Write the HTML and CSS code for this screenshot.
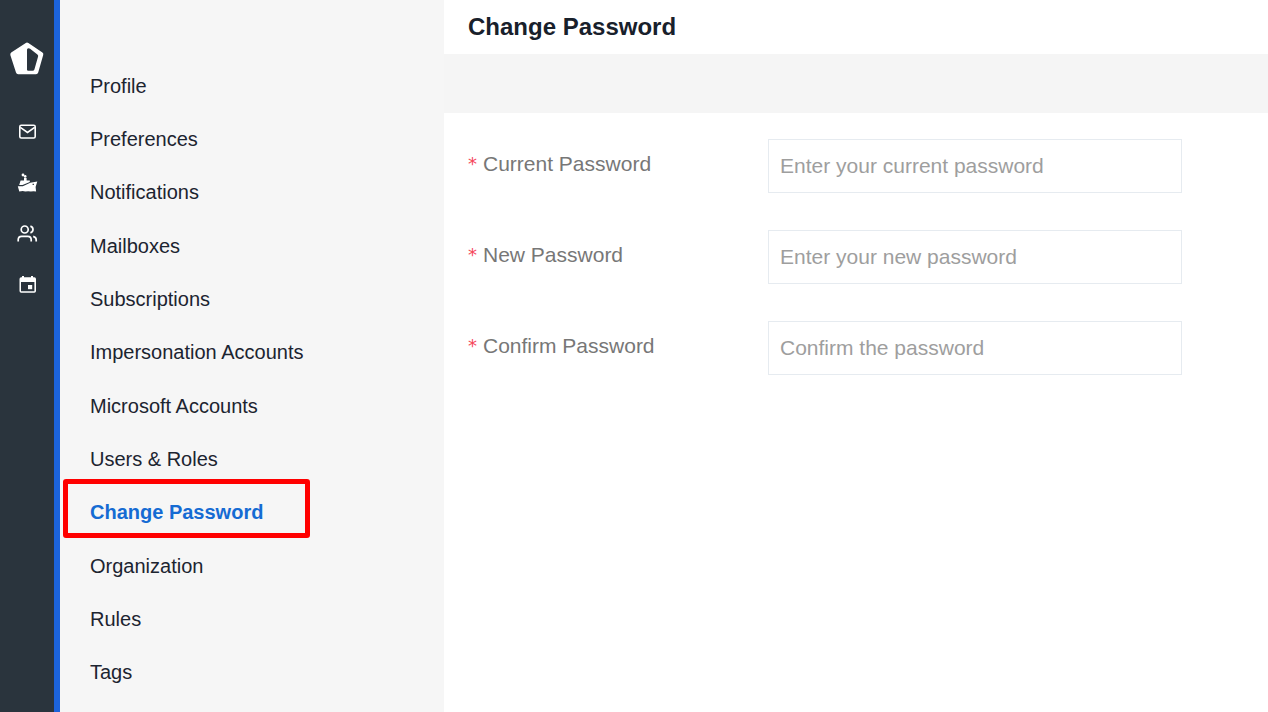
FILE: index.html
```
<!DOCTYPE html>
<html lang="en">
<head>
<meta charset="utf-8">
<meta name="viewport" content="width=device-width, initial-scale=1">
<title>Change Password</title>
<link rel="stylesheet" href="styles.css">
</head>
<body>
<div class="app">
  <nav class="rail" aria-label="Main">
    <a class="logo" href="#" aria-label="Home">
      <svg width="36" height="36" viewBox="0 0 36 36"><path fill="#fff" fill-rule="evenodd" d="M16.800 2.900q1.200-.8 2.600.1l14 9.600q1.300.9.800 2.400l-5 17.600q-.5 1.700-2.200 1.700H9.200q-1.700 0-2.200-1.700L1.400 15.200q-.5-1.600.8-2.600zM18 10v19.800q0 1 1.200 1h4.300q1.500 0 1.900-1.400l3.700-12.900q.4-1.300-.7-2.100l-7.300-5.600q-1.300-.9-2.300-.3-.8.400-.8 1.500z"/></svg>
    </a>
    <a class="rail-link" href="#" aria-label="Mail">
      <svg width="22" height="22" viewBox="0 0 22 22" fill="none" stroke="#fff" stroke-width="1.600"><rect x="3.800" y="5.300" width="15.400" height="12.700" rx="1.500"/><path d="M4.300 7.300l7.200 5.200 7.200-5.200"/></svg>
    </a>
    <a class="rail-link" href="#" aria-label="Vessels">
      <svg width="22" height="22" viewBox="0 0 22 22" fill="#fff"><circle cx="7" cy="4" r="1.400"/><circle cx="9.200" cy="5.400" r="1.300"/><path d="M8 7h2.600v2.600h3.200v1.500L6.500 14H3.200l1.400-4.400H8z"/><path fill-rule="evenodd" d="M1.800 15.200h5l7.500-3.500 7-1.200-1.700 5.500.5 4.600-2.600-.4-2.700.3-2.700-.3-2.800.2-2.600-.3-3.400.3z M16.600 12.700v1.300h1.300v-1.300z"/></svg>
    </a>
    <a class="rail-link" href="#" aria-label="Contacts">
      <svg width="22" height="22" viewBox="0 0 22 22" fill="none" stroke="#fff" stroke-width="1.700"><circle cx="8.700" cy="7.500" r="3.500"/><path d="M2.200 19.500v-1.800q0-3.400 3.400-3.400h6.200q3.400 0 3.400 3.400v1.800M14.400 4.100q2.600.9 2.600 3.400t-2.600 3.400M17.200 14.400q3 .8 3 3.400v1.700"/></svg>
    </a>
    <a class="rail-link" href="#" aria-label="Calendar">
      <svg width="22" height="22" viewBox="0 0 22 22"><path fill="#fff" fill-rule="evenodd" d="M6 3h2v1.300h7V3h2v1.300h1.300q1.700 0 1.700 1.700v12q0 1.700-1.700 1.700H5.200q-1.700 0-1.700-1.700V6q0-1.700 1.700-1.700H6zM5 9v9.200h13.400V9z"/><path fill="#fff" d="M12 12h4.200v4.200H12z"/></svg>
    </a>
  </nav>

  <nav class="menu" aria-label="Settings">
    <a class="menu-link" href="#">Profile</a>
    <a class="menu-link" href="#">Preferences</a>
    <a class="menu-link" href="#">Notifications</a>
    <a class="menu-link" href="#">Mailboxes</a>
    <a class="menu-link" href="#">Subscriptions</a>
    <a class="menu-link" href="#">Impersonation Accounts</a>
    <a class="menu-link" href="#">Microsoft Accounts</a>
    <a class="menu-link" href="#">Users &amp; Roles</a>
    <a class="menu-link active" href="#" aria-current="page">Change Password</a>
    <a class="menu-link" href="#">Organization</a>
    <a class="menu-link" href="#">Rules</a>
    <a class="menu-link" href="#">Tags</a>
  </nav>

  <main class="content">
    <h1 class="title">Change Password</h1>
    <div class="toolbar"></div>
    <form class="form">
      <div class="field">
        <label class="label" for="current"><span class="required">*</span>Current Password</label>
        <input class="input" id="current" type="password" placeholder="Enter your current password">
      </div>
      <div class="field">
        <label class="label" for="new"><span class="required">*</span>New Password</label>
        <input class="input" id="new" type="password" placeholder="Enter your new password">
      </div>
      <div class="field">
        <label class="label" for="confirm"><span class="required">*</span>Confirm Password</label>
        <input class="input" id="confirm" type="password" placeholder="Confirm the password">
      </div>
    </form>
  </main>
</div>
</body>
</html>
```
FILE: styles.css
```
*,
*::after {
  box-sizing: border-box;
}

body {
  margin: 0;
  font-family: "Liberation Sans", Arial, sans-serif;
  color: #1c2430;
  background: #fff;
}

.app {
  display: grid;
  grid-template-columns: 60px 384px 1fr;
  min-height: 100vh;
}

.rail {
  display: flex;
  flex-direction: column;
  align-items: center;
  gap: 29px;
  padding-top: 40px;
  background: #2a343d;
  border-right: 6px solid #1c63db;
}

.logo,
.rail-link {
  display: flex;
}

.logo {
  margin-bottom: 15px;
}

.menu {
  display: grid;
  grid-auto-rows: 1fr;
  padding: 59px 0 13px;
  background: #f6f6f6;
}

.menu-link {
  position: relative;
  display: flex;
  align-items: center;
  padding-left: 30px;
  font-size: 20px;
  line-height: 24px;
  color: #1c2430;
  text-decoration: none;
}

.menu-link.active {
  font-weight: bold;
  color: #156bd3;
}

.menu-link.active::after {
  content: "";
  position: absolute;
  top: -7px;
  left: 3px;
  width: 247px;
  height: 59px;
  border: 5px solid #f00;
  border-radius: 3px;
}

.title {
  margin: 0;
  padding: 12px 24px;
  font-size: 24px;
  line-height: 30px;
  color: #18202b;
}

.toolbar {
  height: 59px;
  background: #f5f5f5;
}

.form {
  display: grid;
  gap: 37px;
  padding: 26px 86px 26px 24px;
}

.field {
  display: grid;
  grid-template-columns: 300px 1fr;
}

.label {
  display: flex;
  align-items: center;
  height: 49px;
  font-size: 21px;
  line-height: 24px;
  color: #777;
}

.required {
  width: 15px;
  font-family: "DejaVu Sans", sans-serif;
  font-size: 18px;
  color: #f5475b;
}

.input {
  width: 100%;
  height: 54px;
  padding: 0 11px;
  border: 1px solid #e6ebf0;
  border-radius: 0;
  background: #fff;
  font-family: inherit;
  font-size: 21px;
  color: #1c2430;
}

.input::placeholder {
  color: #9e9e9e;
  opacity: 1;
}
```
